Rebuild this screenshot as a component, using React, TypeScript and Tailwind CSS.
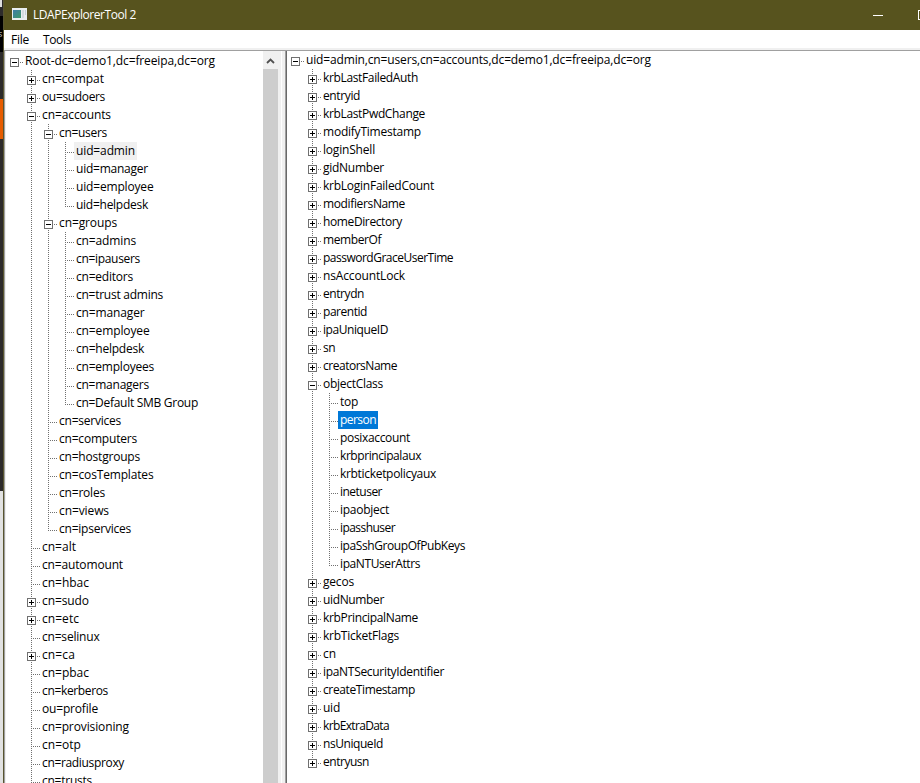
import { useLayoutEffect, useRef } from "react";

type Item = [label: string, level: number, toggle: string, width: number];

const directory: Item[] = [
  ["Root-dc=demo1,dc=freeipa,dc=org", 0, "-", 190],
  ["cn=compat", 1, "+", 62],
  ["ou=sudoers", 1, "+", 63],
  ["cn=accounts", 1, "-", 69],
  ["cn=users", 2, "-", 48],
  ["uid=admin", 3, "", 59],
  ["uid=manager", 3, "", 72],
  ["uid=employee", 3, "", 77.5],
  ["uid=helpdesk", 3, "", 72],
  ["cn=groups", 2, "-", 58],
  ["cn=admins", 3, "", 60],
  ["cn=ipausers", 3, "", 64],
  ["cn=editors", 3, "", 57],
  ["cn=trust admins", 3, "", 87],
  ["cn=manager", 3, "", 68.5],
  ["cn=employee", 3, "", 73.5],
  ["cn=helpdesk", 3, "", 68],
  ["cn=employees", 3, "", 78],
  ["cn=managers", 3, "", 73],
  ["cn=Default SMB Group", 3, "", 122],
  ["cn=services", 2, "", 62],
  ["cn=computers", 2, "", 78],
  ["cn=hostgroups", 2, "", 81],
  ["cn=cosTemplates", 2, "", 94.5],
  ["cn=roles", 2, "", 46],
  ["cn=views", 2, "", 50],
  ["cn=ipservices", 2, "", 72],
  ["cn=alt", 1, "", 34],
  ["cn=automount", 1, "", 81],
  ["cn=hbac", 1, "", 47],
  ["cn=sudo", 1, "+", 47],
  ["cn=etc", 1, "+", 37],
  ["cn=selinux", 1, "", 57.5],
  ["cn=ca", 1, "+", 33],
  ["cn=pbac", 1, "", 47],
  ["cn=kerberos", 1, "", 66],
  ["ou=profile", 1, "", 56],
  ["cn=provisioning", 1, "", 87],
  ["cn=otp", 1, "", 39],
  ["cn=radiusproxy", 1, "", 82],
  ["cn=trusts", 1, "", 50],
];

const attributes: Item[] = [
  ["uid=admin,cn=users,cn=accounts,dc=demo1,dc=freeipa,dc=org", 0, "-", 345],
  ["krbLastFailedAuth", 1, "+", 95],
  ["entryid", 1, "+", 37],
  ["krbLastPwdChange", 1, "+", 102],
  ["modifyTimestamp", 1, "+", 98],
  ["loginShell", 1, "+", 52],
  ["gidNumber", 1, "+", 61],
  ["krbLoginFailedCount", 1, "+", 111],
  ["modifiersName", 1, "+", 82],
  ["homeDirectory", 1, "+", 79],
  ["memberOf", 1, "+", 58],
  ["passwordGraceUserTime", 1, "+", 130],
  ["nsAccountLock", 1, "+", 82],
  ["entrydn", 1, "+", 41],
  ["parentid", 1, "+", 44],
  ["ipaUniqueID", 1, "+", 65],
  ["sn", 1, "+", 12],
  ["creatorsName", 1, "+", 74],
  ["objectClass", 1, "-", 60],
  ["top", 2, "", 18],
  ["person", 2, "", 36],
  ["posixaccount", 2, "", 70],
  ["krbprincipalaux", 2, "", 81],
  ["krbticketpolicyaux", 2, "", 96],
  ["inetuser", 2, "", 42],
  ["ipaobject", 2, "", 49],
  ["ipasshuser", 2, "", 55],
  ["ipaSshGroupOfPubKeys", 2, "", 125],
  ["ipaNTUserAttrs", 2, "", 80],
  ["gecos", 1, "+", 31],
  ["uidNumber", 1, "+", 61],
  ["krbPrincipalName", 1, "+", 95],
  ["krbTicketFlags", 1, "+", 76],
  ["cn", 1, "+", 13],
  ["ipaNTSecurityIdentifier", 1, "+", 121],
  ["createTimestamp", 1, "+", 92],
  ["uid", 1, "+", 17],
  ["krbExtraData", 1, "+", 66],
  ["nsUniqueId", 1, "+", 60],
  ["entryusn", 1, "+", 46],
];

/** Text tracked so that it fills exactly `width` pixels. */
function Label({ text, width }: { text: string; width: number }) {
  const ref = useRef<HTMLSpanElement>(null);
  useLayoutEffect(() => {
    const el = ref.current;
    if (!el) return;
    const fit = () => {
      el.style.letterSpacing = "0px";
      const natural = el.getBoundingClientRect().width;
      el.style.letterSpacing = `${(width - natural) / text.length}px`;
    };
    fit();
    document.fonts.ready.then(fit);
  }, [text, width]);
  return (
    <span ref={ref} className="inline-block whitespace-pre">
      {text}
    </span>
  );
}

/** True when another node of `level` follows before the branch closes. */
function continues(items: Item[], index: number, level: number, open: boolean) {
  for (let i = index + 1; i < items.length; i++) {
    if (items[i][1] < level) return false;
    if (items[i][1] === level) return true;
  }
  return open && level === 1;
}

const dotsV = "bg-[repeating-linear-gradient(to_bottom,#707070_0_1px,transparent_1px_2px)]";
const dotsH = "bg-[repeating-linear-gradient(to_right,#707070_0_1px,transparent_1px_2px)]";

function Guide({ level, toggle, line }: { level: number; toggle: string; line: "none" | "half" | "full" }) {
  return (
    <div className="grid h-[18px] w-[17px] shrink-0">
      {line !== "none" && (
        <div className={`col-start-1 row-start-1 ml-[8px] w-px ${dotsV} ${line === "full" ? "h-[18px]" : "h-[11px]"}`} />
      )}
      {level >= 0 && <div className={`col-start-1 row-start-1 mt-[10px] ml-[8px] h-px w-[9px] ${dotsH}`} />}
      {toggle && (
        <div className="z-10 col-start-1 row-start-1 mt-[6px] ml-[4px] grid size-[9px] place-items-center border border-[#707070] bg-white">
          <div className="col-start-1 row-start-1 h-px w-[5px] bg-black" />
          {toggle === "+" && <div className="col-start-1 row-start-1 h-[5px] w-px bg-black" />}
        </div>
      )}
    </div>
  );
}

function Tree({ items, selected, selectedClass, open }: { items: Item[]; selected: string; selectedClass: string; open: boolean }) {
  return (
    <div>
      {items.map(([text, level, toggle, width], i) => (
        <div key={text} className="flex h-[18px]">
          {Array.from({ length: level }, (_, l) => (
            <Guide key={l} level={-1} toggle="" line={l > 0 && continues(items, i, l, open) ? "full" : "none"} />
          ))}
          <Guide
            level={level}
            toggle={toggle}
            line={level === 0 ? "none" : continues(items, i, level, open) ? "full" : "half"}
          />
          <div className={`h-[18px] px-[2px] leading-[18px] ${text === selected ? selectedClass : ""}`}>
            <Label text={text} width={width} />
          </div>
        </div>
      ))}
    </div>
  );
}

export default function App() {
  return (
    <div className="flex h-[783px] w-[920px] overflow-hidden bg-white font-['Open_Sans',sans-serif] text-[12px] text-black">
      <div className="flex w-[3px] shrink-0 flex-col overflow-hidden bg-[#2d2b2b]">
        <div className="h-[7px] w-[2px] shrink-0 bg-[#dedede]" />
        <div className="h-[9px] shrink-0" />
        <div className="h-[36px] shrink-0 bg-black text-[9px] leading-[36px] text-[#c8c8c8]">
          <span className="-ml-[2px]">s</span>
        </div>
        <div className="h-[47px] shrink-0" />
        <div className="h-[40px] shrink-0 bg-[#e65c00]" />
        <div className="h-[352px] shrink-0" />
        <div className="flex-1 bg-[#e2e2e2]" />
      </div>
      <div className="w-px shrink-0 bg-[#58552f]" />
      <div className="flex min-w-0 flex-1 flex-col">
        <div className="flex h-[30px] shrink-0 items-center bg-[#57531e] text-white">
          <svg className="-mt-[2px] ml-[8px] shrink-0" width="15" height="12" viewBox="0 0 15 12" shapeRendering="crispEdges">
            <defs>
              <linearGradient id="screen" x1="0" y1="0" x2="1" y2="1">
                <stop offset="0" stopColor="#3d7ca8" />
                <stop offset="1" stopColor="#3f9a68" />
              </linearGradient>
            </defs>
            <rect width="15" height="12" fill="#e9eef0" />
            <rect x="1" y="2" width="8" height="8" fill="url(#screen)" />
            <rect x="10" y="2" width="2" height="8" fill="#d5dcdf" />
            <rect x="13" y="2" width="1" height="5" fill="#c3ced3" />
          </svg>
          <div className="ml-[6px] leading-[30px]">
            <Label text="LDAPExplorerTool 2" width={103} />
          </div>
          <div className="mr-[35px] ml-auto h-px w-[10px] bg-white" />
          <div className="h-[10px] w-[2px] shrink-0 border-y border-l border-white" />
        </div>
        <div className="flex h-[18px] shrink-0 leading-[20px]">
          <div className="ml-[7px] w-[32px]">
            <Label text="File" width={18} />
          </div>
          <Label text="Tools" width={28} />
        </div>
        <div className="h-[3px] shrink-0 border-b border-[#a0a0a0] bg-[#f0f0f0]" />
        <div className="flex min-h-0 flex-1">
          <div className="w-px shrink-0 bg-[#a0a0a0]" />
          <div className="w-px shrink-0 bg-[#f0f0f0]" />
          <div className="w-[257px] shrink-0 overflow-hidden pt-px">
            <Tree items={directory} selected="uid=admin" selectedClass="bg-[#f0f0f0]" open />
          </div>
          <div className="flex w-[15px] shrink-0 flex-col bg-[#cdcdcd]">
            <div className="flex h-[18px] items-center justify-center bg-[#f0f0f0] pt-px">
              <svg width="9" height="6" viewBox="0 0 9 6" fill="none" stroke="#505050" strokeWidth="1.8">
                <path d="M1 5 4.5 1.5 8 5" />
              </svg>
            </div>
          </div>
          <div className="w-[3px] shrink-0 bg-[#f0f0f0]" />
          <div className="w-px shrink-0 bg-white" />
          <div className="w-[3px] shrink-0 bg-[#f0f0f0]" />
          <div className="w-px shrink-0 bg-[#a0a0a0]" />
          <div className="w-px shrink-0 bg-[#696969]" />
          <div className="min-w-0 flex-1 overflow-hidden">
            <Tree items={attributes} selected="person" selectedClass="bg-[#0078d7] text-white" open={false} />
          </div>
        </div>
      </div>
    </div>
  );
}
